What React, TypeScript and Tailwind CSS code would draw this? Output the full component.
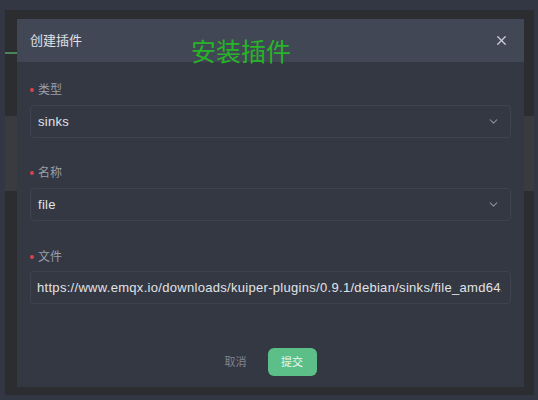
import { X, ChevronDown } from "lucide-react";

const font = { fontFamily: '"Liberation Sans", "Noto Sans CJK SC", sans-serif' };

function Label({ text }: { text: string }) {
  return (
    <div className="flex h-4 items-center gap-[4px] text-[12px] leading-4 text-[#9a9ea8]">
      <span className="-mt-[1px] h-[4px] w-[4px] rounded-full bg-[#d9434f]" />
      <span>{text}</span>
    </div>
  );
}

function Select({ value }: { value: string }) {
  return (
    <div className="mt-[7px] flex h-[33px] items-center justify-between rounded-[4px] border border-[#3f4350] pl-[7px] pr-[10px]">
      <span className="text-[13px] tracking-[0.3px] text-[#e2e3e6]">{value}</span>
      <ChevronDown className="h-[13px] w-[13px] text-[#8a8e98]" strokeWidth={2} />
    </div>
  );
}

export default function App() {
  return (
    <div className="h-[400px] w-[538px] bg-[#333743] pl-[5px] pr-[4px] pt-[10px] pb-[5px]" style={font}>
      <div className="relative h-full overflow-hidden bg-[#2b2d31]">
        {/* page behind the dialog */}
        <div className="pt-[42px]">
          <div className="h-[2px] w-[40px] bg-[#4a8458]" />
          <div className="mt-[62px] h-[75px] bg-[#393b40]" />
        </div>

        <div className="absolute left-[12px] top-[9px] flex h-[368px] w-[507px] flex-col bg-[#343843]">
          <div className="flex h-[43px] items-center justify-between bg-[#424756] pl-[13px] pr-[15px]">
            <span className="text-[13px] text-[#e0e1e4]">创建插件</span>
            <X className="h-[15px] w-[15px] text-[#c9cbd0]" strokeWidth={2.2} />
          </div>

          <div className="px-[13px] pt-[20px]">
            <Label text="类型" />
            <Select value="sinks" />

            <div className="mt-[27px]">
              <Label text="名称" />
              <Select value="file" />
            </div>

            <div className="mt-[28px]">
              <Label text="文件" />
              <div className="mt-[6px] flex h-[33px] items-center rounded-[4px] border border-[#3f4350] pl-[6px] pr-[8px]">
                <span className="min-w-0 flex-1 overflow-hidden whitespace-nowrap text-[13px] tracking-[0.3px] text-[#e2e3e6]">
                  https://www.emqx.io/downloads/kuiper-plugins/0.9.1/debian/sinks/file_amd64.zip
                </span>
              </div>
            </div>
          </div>

          <div className="mt-[44px] flex items-center justify-center gap-[21px]">
            <span className="text-[11px] text-[#80848e]">取消</span>
            <button className="h-[28px] w-[49px] rounded-[6px] bg-[#5bbf87] text-[11px] text-[#eef8f2]">提交</button>
          </div>
        </div>

        <span className="absolute left-[186px] top-[27px] text-[25px] leading-[30px] text-[#26b526]">安装插件</span>
      </div>
    </div>
  );
}
